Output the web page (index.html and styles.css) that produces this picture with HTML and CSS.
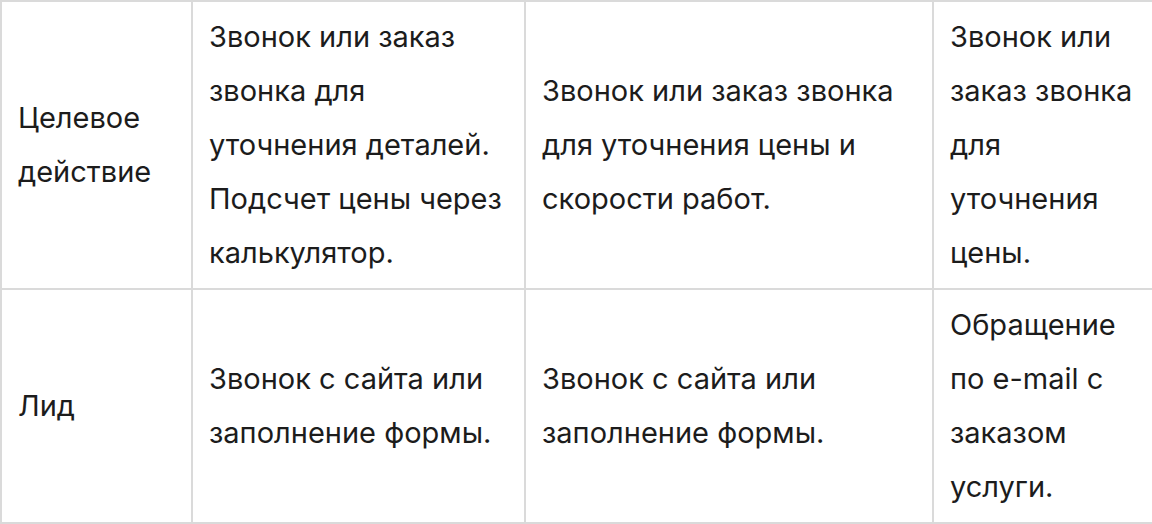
FILE: index.html
```html
<!DOCTYPE html>
<html lang="ru">
<head>
<meta charset="utf-8">
<link rel="stylesheet" href="styles.css">
</head>
<body>
<table class="grid">
  <colgroup>
    <col class="c1"><col class="c2"><col class="c3"><col class="c4">
  </colgroup>
  <tbody>
    <tr>
      <td>Целевое действие</td>
      <td>Звонок или заказ звонка для уточнения деталей. Подсчет цены через калькулятор.</td>
      <td>Звонок или заказ звонка для уточнения цены и скорости работ.</td>
      <td>Звонок или заказ звонка для уточнения цены.</td>
    </tr>
    <tr>
      <td>Лид</td>
      <td>Звонок с сайта или заполнение формы.</td>
      <td>Звонок с сайта или заполнение формы.</td>
      <td>Обращение по e-mail с заказом услуги.</td>
    </tr>
  </tbody>
</table>
</body>
</html>
```
FILE: styles.css
```css
html, body {
  margin: 0;
  padding: 0;
  background: #ffffff;
  overflow: hidden;
}
body {
  font-family: "Inter", "Noto Sans", sans-serif;
  font-size: 29px;
  line-height: 54px;
  color: #1c1c1c;
}
.grid {
  table-layout: fixed;
  border-collapse: separate;
  border-spacing: 0;
  border-top: 2px solid #dadada;
  border-left: 2px solid #dadada;
  width: 1168px;
}
.grid td {
  box-sizing: border-box;
  padding: 8px 16px;
  border-right: 2px solid #dadada;
  border-bottom: 2px solid #dadada;
  vertical-align: middle;
  text-align: left;
}
.c1 { width: 191px; }
.c2 { width: 333px; }
.c3 { width: 408px; }
.c4 { width: 234px; }
```
